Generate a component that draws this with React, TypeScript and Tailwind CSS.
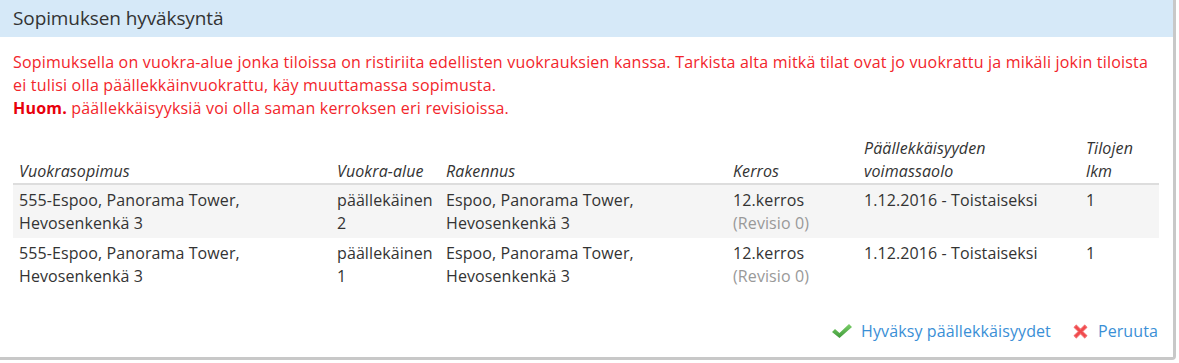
import React from "react";

type Row = {
  sopimus: [string, string];
  alue: [string, string];
  rakennus: [string, string];
  kerros: string;
  revisio: string;
  voimassa: string;
  lkm: string;
};

const rows: Row[] = [
  {
    sopimus: ["555-Espoo, Panorama Tower,", "Hevosenkenkä 3"],
    alue: ["päällekäinen", "2"],
    rakennus: ["Espoo, Panorama Tower,", "Hevosenkenkä 3"],
    kerros: "12.kerros",
    revisio: "(Revisio 0)",
    voimassa: "1.12.2016 - Toistaiseksi",
    lkm: "1",
  },
  {
    sopimus: ["555-Espoo, Panorama Tower,", "Hevosenkenkä 3"],
    alue: ["päällekäinen", "1"],
    rakennus: ["Espoo, Panorama Tower,", "Hevosenkenkä 3"],
    kerros: "12.kerros",
    revisio: "(Revisio 0)",
    voimassa: "1.12.2016 - Toistaiseksi",
    lkm: "1",
  },
];

const CheckIcon = () => (
  <svg width="22" height="18" viewBox="0 0 22 18">
    <defs>
      <linearGradient id="g" x1="0" y1="0" x2="0" y2="1">
        <stop offset="0" stopColor="#7ccf6a" />
        <stop offset="1" stopColor="#3f9a3a" />
      </linearGradient>
    </defs>
    <path d="M1 10 L4 7 L8.5 11 L18 2 L21 5 L8.5 16 Z" fill="url(#g)" />
  </svg>
);

const XIcon = () => (
  <svg width="19" height="19" viewBox="0 0 18 18">
    <path
      d="M3 5 L5 3 L9 7 L13 3 L15 5 L11 9 L15 13 L13 15 L9 11 L5 15 L3 13 L7 9 Z"
      fill="#f0494c"
      stroke="#f36b6d"
      strokeWidth="1"
      strokeLinejoin="round"
    />
  </svg>
);

export default function App() {
  return (
    <div
      className="w-[1179px] h-[363px] bg-white"
      style={{ fontFamily: '"Open Sans", "Noto Sans", sans-serif' }}
    >
      <div className="w-[1176px] h-[360px] bg-white border-r-[3px] border-b-[3px] border-[#c8c8c8] rounded-br-[4px] flex flex-col">
        <div className="h-[37px] bg-[#d6e9f8] flex items-center px-[13px] text-[19px] text-[#333] tracking-[-0.1px]">
          Sopimuksen hyväksyntä
        </div>
        <div className="px-[13px] pt-[14px] text-[16px] leading-[23px] text-[#f2252b] tracking-[0.2px]">
          <p>
            Sopimuksella on vuokra-alue jonka tiloissa on ristiriita edellisten vuokrauksien kanssa.
            Tarkista alta mitkä tilat ovat jo vuokrattu ja mikäli jokin tiloista ei tulisi olla
            päällekkäinvuokrattu, käy muuttamassa sopimusta.
          </p>
          <p>
            <span className="font-bold text-[#e8000b]">Huom.</span> päällekkäisyyksiä voi olla saman
            kerroksen eri revisioissa.
          </p>
        </div>
        <div className="px-[13px] pt-[17px] pr-[14px]">
          <table className="w-full border-collapse text-[16px] leading-[23px] text-[#333] tracking-[0.1px]">
            <thead>
              <tr className="border-b-2 border-[#ddd] italic text-left align-bottom">
                <th className="font-normal px-[6px] pb-0 w-[318px]">Vuokrasopimus</th>
                <th className="font-normal px-[6px] pb-0 w-[109px]">Vuokra-alue</th>
                <th className="font-normal px-[6px] pb-0 w-[287px]">Rakennus</th>
                <th className="font-normal px-[6px] pb-0 w-[131px]">Kerros</th>
                <th className="font-normal px-[6px] pb-0 w-[222px]">
                  Päällekkäisyyden
                  <br />
                  voimassaolo
                </th>
                <th className="font-normal px-[6px] pb-0">
                  Tilojen
                  <br />
                  lkm
                </th>
              </tr>
            </thead>
            <tbody>
              {rows.map((r, i) => (
                <tr key={i} className={`align-top ${i % 2 === 0 ? "bg-[#f5f5f5]" : "bg-white"}`}>
                  <td className="px-[6px] pt-[4px] pb-[3px]">
                    {r.sopimus[0]}
                    <br />
                    {r.sopimus[1]}
                  </td>
                  <td className="px-[6px] pt-[4px] pb-[3px]">
                    {r.alue[0]}
                    <br />
                    {r.alue[1]}
                  </td>
                  <td className="px-[6px] pt-[4px] pb-[3px]">
                    {r.rakennus[0]}
                    <br />
                    {r.rakennus[1]}
                  </td>
                  <td className="px-[6px] pt-[4px] pb-[3px]">
                    {r.kerros}
                    <br />
                    <span className="text-[#999]">{r.revisio}</span>
                  </td>
                  <td className="px-[6px] pt-[4px] pb-[3px]">{r.voimassa}</td>
                  <td className="px-[6px] pt-[4px] pb-[3px]">{r.lkm}</td>
                </tr>
              ))}
            </tbody>
          </table>
        </div>
        <div className="flex-1" />
        <div className="flex justify-end items-center gap-[20px] pr-[15px] pb-[14px] text-[16px] text-[#3a8fd6] tracking-[0.1px]">
          <a className="flex items-center gap-[8px] cursor-pointer">
            <CheckIcon />
            Hyväksy päällekkäisyydet
          </a>
          <a className="flex items-center gap-[8px] cursor-pointer">
            <XIcon />
            Peruuta
          </a>
        </div>
      </div>
    </div>
  );
}
